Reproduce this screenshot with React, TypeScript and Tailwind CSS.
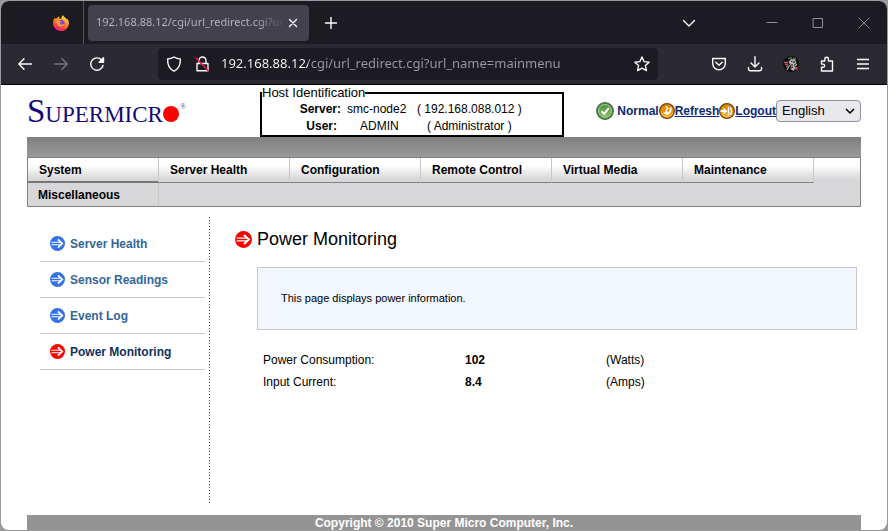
import React from "react";

type IconProps = { className?: string; children: React.ReactNode };

function Stroke({ className = "", children }: IconProps) {
  return (
    <svg
      viewBox="0 0 16 16"
      className={`h-4 w-4 shrink-0 ${className}`}
      fill="none"
      stroke="currentColor"
      strokeWidth="1.4"
      strokeLinecap="round"
      strokeLinejoin="round"
      aria-hidden="true"
    >
      {children}
    </svg>
  );
}

function Firefox() {
  return (
    <svg viewBox="0 0 16 16" className="h-4 w-4" aria-hidden="true">
      <defs>
        <linearGradient id="fox" x1="0.8" y1="0" x2="0.3" y2="1">
          <stop offset="0" stopColor="#fff04a" />
          <stop offset="0.45" stopColor="#ff8a1f" />
          <stop offset="0.8" stopColor="#ff3750" />
          <stop offset="1" stopColor="#e5159a" />
        </linearGradient>
      </defs>
      <path
        fill="url(#fox)"
        d="M10 0c.4 1.4 1.6 2 2.6 3 .5.5.8 1 1 1.400l.2-1C15.300 4.700 16 6.500 15.900 8.400 15.700 12.700 12.300 16 8 16S0 12.600 0 8.300C0 6 .8 4 2 2.500l.4 1.300C3 3.400 3.400 3.300 4 3.200c.5-.9 1.200-1.500 2.200-1.900L6.100 3.500l2.200.3C8.400 2.300 9 .9 10 0Z"
      />
      <circle cx="8" cy="8.200" r="3.500" fill="#8046e0" />
      <path fill="#ffa21f" d="M3.200 5.500c1.500-.6 2.700-.3 3.600.4l1.600.2c-.1 1-1.200 1-1.500 1.800-.2 1.200.8 2 2.200 1.700 1-.2 1.500-.5 2.200-.1-.5 1.500-2.300 2.300-4 1.900C4.500 10.800 3 8.500 3.200 5.500Z" />
    </svg>
  );
}

function Avatar() {
  return (
    <svg viewBox="0 0 16 16" className="h-4 w-4" aria-hidden="true">
      <circle cx="8" cy="8" r="8" fill="#0c0d0c" />
      <path d="M5 2.500 9 1.500M10 2l3 1.500" stroke="#4d7a3a" strokeWidth="1.500" />
      <path d="M5.500 6 8 3l4 .5 1.500 3.500L11 9l1.500 3-2 3-3-2 .5-3z" fill="#b4b5b3" />
      <path d="M8 5.500h1.500M9 8v2M8 12l2-1M11 5v2" stroke="#1c1f1c" strokeWidth="1.200" />
      <path d="M1 6.500h4M2 8.500h3M3 11l2-1" stroke="#c2566e" strokeWidth="1.300" />
      <path d="m4 14 2.500-5M12 10l2-2" stroke="#a3adab" strokeWidth="1.300" />
      <circle cx="13.200" cy="12.300" r="1.400" fill="#e04a55" />
    </svg>
  );
}

function ArrowDisc({ size, color }: { size: string; color: string }) {
  return (
    <svg viewBox="0 0 16 16" className={`${size} ${color} shrink-0`} aria-hidden="true">
      <circle cx="8" cy="8" r="8" fill="currentColor" />
      <path d="M1.500 6.700h10M1.500 9.300h10" stroke="#fff" strokeWidth="1.100" />
      <path d="m8.500 3.700 4.500 4.300-4.500 4.300" fill="none" stroke="#fff" strokeWidth="1.900" />
    </svg>
  );
}

function CheckDisc() {
  return (
    <svg viewBox="0 0 18 18" className="h-[18px] w-[18px] shrink-0" aria-hidden="true">
      <defs>
        <linearGradient id="leaf" x1="0" y1="0" x2="0" y2="1">
          <stop offset="0" stopColor="#4f8f3e" />
          <stop offset="1" stopColor="#8cc56a" />
        </linearGradient>
      </defs>
      <circle cx="9" cy="9" r="8.300" fill="#4b8a40" stroke="#3c6a40" strokeWidth="1.200" />
      <circle cx="9" cy="9" r="6.500" fill="url(#leaf)" stroke="#a9cf9c" />
      <path d="m5.500 9.200 2.700 2.800L12.800 6" fill="none" stroke="#fff" strokeWidth="2" />
    </svg>
  );
}

function OrangeDisc({ children }: { children: React.ReactNode }) {
  return (
    <svg viewBox="0 0 16 16" className="h-4 w-4 shrink-0" aria-hidden="true">
      <defs>
        <linearGradient id="amber" x1="0" y1="0" x2="0" y2="1">
          <stop offset="0" stopColor="#d98708" />
          <stop offset="0.5" stopColor="#e88d0c" />
          <stop offset="1" stopColor="#ffc64a" />
        </linearGradient>
      </defs>
      <circle cx="8" cy="8" r="7.400" fill="url(#amber)" stroke="#70420d" strokeWidth="1.200" />
      {children}
    </svg>
  );
}

const menu = ["System", "Server Health", "Configuration", "Remote Control", "Virtual Media", "Maintenance"];
const side = ["Server Health", "Sensor Readings", "Event Log", "Power Monitoring"];
const readings = [
  ["Power Consumption:", "102", "(Watts)"],
  ["Input Current:", "8.4", "(Amps)"],
];

function TabStrip() {
  return (
    <div className="flex h-[43px] items-center bg-[#1c1b22] text-[#fbfbfe]">
      <button aria-label="Pinned tab" className="flex h-full w-[83px] items-center justify-end border-r border-[#55545c] pr-[14px]">
        <Firefox />
      </button>
      <div className="ml-1 flex h-9 w-[221px] items-center rounded bg-[#42414d] pr-2 pl-2">
        <span className="flex-1 bg-gradient-to-r from-[#b8b8bd] from-85% to-[#42414d] bg-clip-text font-['Noto_Sans',sans-serif] text-[11px] whitespace-nowrap text-transparent">
          192.168.88.12/cgi/url_redirect.cgi?ur
        </span>
        <button aria-label="Close tab">
          <Stroke><path d="m4.500 4.500 7 7m0-7-7 7" /></Stroke>
        </button>
      </div>
      <button aria-label="New tab" className="ml-[14px]">
        <Stroke><path d="M8 2.500v11M2.500 8h11" /></Stroke>
      </button>
      <div className="flex-1" />
      <button aria-label="List all tabs">
        <Stroke><path d="m2.500 5.500 5.500 5.500 5.500-5.500" /></Stroke>
      </button>
      <div className="ml-[67px] flex gap-[30px] pr-[15px] text-[#8f8f94]">
        <button aria-label="Minimize"><Stroke><path strokeWidth="1" d="M3 7.500h10" /></Stroke></button>
        <button aria-label="Maximize"><Stroke><path strokeWidth="1" strokeLinejoin="miter" d="M3.500 3.500h9v9h-9z" /></Stroke></button>
        <button aria-label="Close"><Stroke><path strokeWidth="1" d="m3 3 10 10m0-10L3 13" /></Stroke></button>
      </div>
    </div>
  );
}

function Toolbar() {
  return (
    <div className="flex h-[41px] items-center border-b border-black bg-[#2b2a33] px-4 text-[#fbfbfe]">
      <div className="flex gap-5">
        <button aria-label="Back"><Stroke><path d="M14.500 8H1.800M7 2.800 1.800 8 7 13.200" /></Stroke></button>
        <button aria-label="Forward" className="text-[#77767d]"><Stroke><path d="M1.500 8h12.700M9 2.800 14.200 8 9 13.200" /></Stroke></button>
        <button aria-label="Reload">
          <Stroke><path d="M14 9.500A6.200 6.200 0 1 1 12.500 3.800L14 5.300" /><path fill="currentColor" d="M14.500 1.800v4.400h-4.400z" /></Stroke>
        </button>
      </div>
      <div className="ml-[53px] flex h-8 flex-1 items-center rounded bg-[#1c1b22] px-2">
        <Stroke><path d="M8 1c2 1.300 4 1.800 6.300 1.900.4 5.200-1.800 10-6.300 12.300C3.500 12.900 1.300 8.100 1.700 2.900 4 2.800 6 2.300 8 1Z" /></Stroke>
        <Stroke className="ml-3">
          <path d="M3 7.500h11v7.300H3zM5 7V4.500a3.500 3.500 0 0 1 7 0V7" />
          <path stroke="#e31648" strokeWidth="1.600" d="m2 2 12 12.500" />
        </Stroke>
        <input
          type="text"
          aria-label="Address"
          defaultValue="192.168.88.12/cgi/url_redirect.cgi?url_name=mainmenu"
          className="ml-[11px] min-w-0 flex-1 bg-[linear-gradient(to_right,#fbfbfe_87px,#9c9ba1_87px)] bg-clip-text font-['Noto_Sans',sans-serif] text-[13px] text-transparent outline-none"
        />
        <button aria-label="Bookmark this page">
          <Stroke><path d="m8 1 2.100 4.600 5 .6-3.700 3.400 1 5L8 12.100l-4.400 2.500 1-5L.900 6.200l5-.6z" /></Stroke>
        </button>
      </div>
      <div className="ml-[53px] flex gap-5">
        <button aria-label="Save to Pocket"><Stroke><path d="M1.700 2.500h12.600v5a6.300 6.300 0 0 1-12.600 0zM4.800 6.300 8 9.300l3.200-3" /></Stroke></button>
        <button aria-label="Downloads"><Stroke><path d="M8 .800v10M4 7l4 4 4-4M1.500 11.500v1.600c0 1 .6 1.600 1.600 1.600h9.800c1 0 1.600-.6 1.600-1.600v-1.600" /></Stroke></button>
        <button aria-label="Account"><Avatar /></button>
        <button aria-label="Extensions"><Stroke><path d="M2.500 5h3.300V3a1.800 1.800 0 0 1 3.600 0v2H13.500v10H2.500v-3.700H4a1.600 1.600 0 0 0 0-3.200H2.500z" /></Stroke></button>
        <button aria-label="Menu"><Stroke><path strokeLinecap="butt" d="M2 3.500h12M2 8h12M2 12.500h12" /></Stroke></button>
      </div>
    </div>
  );
}

function Header() {
  return (
    <header className="flex h-[52px] items-start">
      <a href="#" aria-label="Supermicro" className="mt-[11px] flex w-[233px] items-baseline font-['Liberation_Serif',serif] leading-[30px] text-[#15087a]">
        <span className="text-[33px]">S</span>
        <span className="text-[23px]">UPERMICR</span>
        <span className="h-4 w-4 rounded-full bg-[#ff0000]" />
        <span className="ml-px self-start text-[8px] leading-[22px] text-[#5a52a0]">®</span>
      </a>
      <fieldset className="h-[52px] w-[304px] border-2 border-black text-[12px] leading-[17px]">
        <legend className="text-[13px] leading-4">Host Identification</legend>
        <div className="grid grid-cols-[79px_76px_1fr]">
          <b className="text-right">Server:</b>
          <span className="pl-[6px]">smc-node2</span>
          <span>( 192.168.088.012 )</span>
          <b className="pr-1 text-right">User:</b>
          <span className="pl-[19px]">ADMIN</span>
          <span className="pl-[10px]">( Administrator )</span>
        </div>
      </fieldset>
      <div className="mt-[15px] ml-auto flex h-[22px] items-center text-[12px] font-bold text-[#0b2a78]">
        <CheckDisc />
        <span className="ml-[3px]">Normal</span>
        <OrangeDisc>
          <path d="m6.800 3.500 2 1.800L7 7.600" fill="none" stroke="#fff" strokeWidth="1.300" />
          <path d="M11.500 4.500c.8 3-.5 5.600-4 6.200" fill="none" stroke="#fff" strokeWidth="1.900" />
          <path fill="#fff" d="M4 10.200 8.200 7.400 8.600 12z" />
        </OrangeDisc>
        <a href="#" className="underline">Refresh</a>
        <OrangeDisc>
          <path d="M1.500 8h4" stroke="#fff" strokeWidth="2" />
          <path fill="#fff" d="M4.500 4.500 8.500 8l-4 3.500z" />
          <path d="M9.500 3.500v9M11 4.500c2 1.800 2 5.200 0 7" fill="none" stroke="#fff" strokeWidth="1.400" />
        </OrangeDisc>
        <a href="#" className="underline">Logout</a>
        <div className="relative">
          <select
            aria-label="Language"
            className="block h-[22px] w-[85px] appearance-none rounded border border-[#8f8f9d] bg-[#e9e9ed] pl-[5px] text-[13px] font-normal text-black"
          >
            <option>English</option>
          </select>
          <svg viewBox="0 0 10 10" className="pointer-events-none absolute top-[6px] right-[6px] h-[10px] w-[10px]" fill="none" stroke="#000" strokeWidth="1.500" aria-hidden="true">
            <path d="m1 3 4 4 4-4" />
          </svg>
        </div>
      </div>
    </header>
  );
}

function MainMenu() {
  return (
    <nav className="text-[12px] font-bold">
      <div className="h-5 bg-gradient-to-b from-[#808080] to-[#9a9a9a]" />
      <div className="border border-[#808080] bg-[#d7d7d9]">
        <div className="flex h-[25px] bg-gradient-to-b from-white from-30% to-[#d7d7d9] to-85%">
          {menu.map((m, i) => (
            <a
              key={m}
              href="#"
              className={`flex w-[131px] items-center border-r border-r-[#c8c8c8] pl-[11px] ${i === 0 ? "border-b-2 border-b-[#777777]" : "border-b border-b-[#808080]"}`}
            >
              {m}
            </a>
          ))}
        </div>
        <div className="flex h-[23px]">
          <a href="#" className="flex w-[131px] items-center border-r border-[#c8c8c8] pl-[10px]">
            Miscellaneous
          </a>
        </div>
      </div>
    </nav>
  );
}

export default function App() {
  return (
    <div className="min-h-screen bg-[#9a9a9a] p-px font-['Liberation_Sans',Arial,sans-serif] text-black">
      <div className="flex min-h-[calc(100vh-2px)] flex-col overflow-hidden rounded-lg bg-white">
        <TabStrip />
        <Toolbar />
        <div className="flex flex-1 flex-col px-[26px]">
          <Header />
          <MainMenu />
          <div className="flex flex-1 pt-[10px] pb-3">
            <aside className="w-[178px] pt-[9px] pl-[13px] text-[12px] font-bold">
              {side.map((s) => {
                const on = s === "Power Monitoring";
                return (
                  <a
                    key={s}
                    href="#"
                    className={`flex h-9 items-center gap-[5px] border-b border-[#c8c8c8] pl-[10px] ${on ? "text-[#10305e]" : "text-[#336699]"}`}
                  >
                    <ArrowDisc size="h-[15px] w-[15px]" color={on ? "text-[#ff0000]" : "text-[#3470e8]"} />
                    {s}
                  </a>
                );
              })}
            </aside>
            <div className="ml-1 w-px bg-[repeating-linear-gradient(to_bottom,#2233cc_0px,#2233cc_1px,#ffffff_1px,#ffffff_3px)]" />
            <main className="flex-1 pt-[11px] pr-1 pl-[25px]">
              <h1 className="flex h-[22px] items-center gap-[5px] text-[18px]">
                <ArrowDisc size="h-[17px] w-[17px]" color="text-[#ff0000]" />
                Power Monitoring
              </h1>
              <div className="ml-[22px]">
                <p className="mt-[17px] flex h-[63px] items-center border border-[#c8c8c8] bg-[#f2f6ff] pl-[23px] text-[11px]">
                  This page displays power information.
                </p>
                <table className="mt-[19px] ml-[6px] text-left text-[12px]">
                  <tbody>
                    {readings.map(([label, value, unit]) => (
                      <tr key={label} className="h-[22px]">
                        <th scope="row" className="w-[202px] font-normal">{label}</th>
                        <td className="w-[141px] font-bold">{value}</td>
                        <td>{unit}</td>
                      </tr>
                    ))}
                  </tbody>
                </table>
              </div>
            </main>
          </div>
          <footer className="flex h-[15px] items-center justify-center bg-[#949494] text-[12px] font-bold text-white">
            Copyright © 2010 Super Micro Computer, Inc.
          </footer>
        </div>
      </div>
    </div>
  );
}
